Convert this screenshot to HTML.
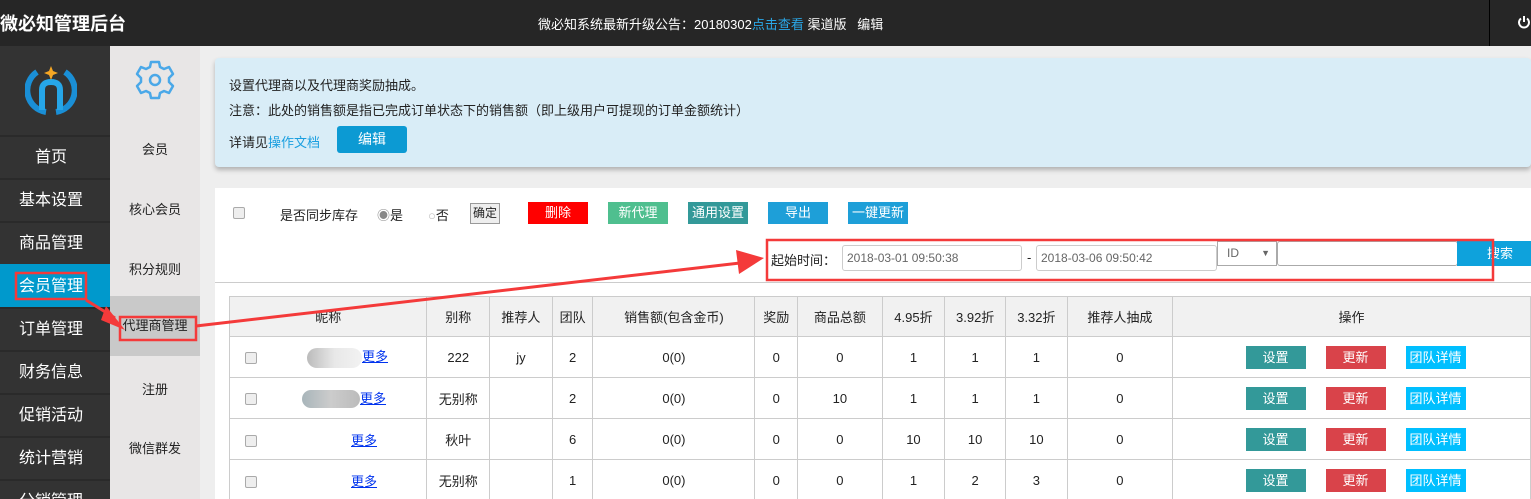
<!DOCTYPE html>
<html><head><meta charset="utf-8"><style>
*{margin:0;padding:0;box-sizing:border-box}
html,body{width:1531px;height:499px;overflow:hidden}
body{background:#eee;font-family:"Liberation Sans","Noto Sans CJK SC",sans-serif;font-size:13px;color:#222;position:relative}
.a{position:absolute}
.top{left:0;top:0;width:1531px;height:46px;background:#262626;color:#fff}
.side{left:0;top:46px;width:110px;height:453px;background:#333}
.si{position:absolute;left:0;width:110px;height:43px;border-top:2px solid #2a2a2a;color:#fff;font-size:16px;text-align:center;line-height:41px;padding-right:8px}
.side2{left:110px;top:46px;width:90px;height:453px;background:#e8e6e6}
.s2{position:absolute;left:0;width:90px;text-align:center;font-size:13px;color:#222}
.btn{position:absolute;height:22px;line-height:22px;color:#fff;text-align:center;font-size:13px;width:60px}
.ob{display:inline-block;width:60px;height:23px;line-height:23px;color:#fff;margin:0 10px;vertical-align:middle}
table{border-collapse:collapse;table-layout:fixed;position:absolute;left:229px;top:296px}
td{border:1px solid #ccc;text-align:center;height:41px;font-size:13px;color:#222;background:#fff;padding:0}
tr.h td{background:#f1f1f1;height:40px}
td.op{padding-left:8px}
.cb{display:inline-block;width:12px;height:12px;border:1px solid #aaa;border-radius:2px;background:#eee;vertical-align:middle}
a{color:#0033ee;text-decoration:underline}
.inp{position:absolute;height:26px;border:1px solid #ccc;border-radius:3px;background:#fff;color:#666;font-size:12px;line-height:24px;padding-left:4px}
</style></head><body>
<div class="a top">
 <div class="a" style="left:0;top:10px;font-size:18px;font-weight:bold">微必知管理后台</div>
 <div class="a" style="left:538px;top:14px;font-size:13px">微必知系统最新升级公告：20180302<span style="color:#2aa8e8">点击查看</span> 渠道版&nbsp;&nbsp;&nbsp;编辑</div>
 <div class="a" style="left:1489px;top:0;width:1px;height:46px;background:#000"></div>
 <svg class="a" style="left:1517px;top:14px" width="14" height="16"><path d="M7 2v6M4 4.5A5 5 0 1 0 10 4.5" stroke="#fff" stroke-width="2" fill="none"/></svg>
</div>
<div class="a side">
 <svg class="a" style="left:25px;top:18px" width="52" height="52" viewBox="0 0 52 52"><path d="M12 8A22 22 0 0 0 21 48" stroke="#1a8fd6" stroke-width="6" fill="none"/><path d="M40 8A22 22 0 0 1 31 48" stroke="#1a8fd6" stroke-width="6" fill="none"/><path d="M17 46V26q0-8 9-8t9 8v20" stroke="#26a6e8" stroke-width="6" fill="none"/><path d="M26 2l2 5 5 2-5 2-2 5-2-5-5-2 5-2z" fill="#f5a623"/></svg>
 <div class="si" style="top:89px">首页</div>
 <div class="si" style="top:132px">基本设置</div>
 <div class="si" style="top:175px">商品管理</div>
 <div class="si" style="top:218px;background:#0099cc;border-top-color:#0099cc">会员管理</div>
 <div class="si" style="top:261px">订单管理</div>
 <div class="si" style="top:304px">财务信息</div>
 <div class="si" style="top:347px">促销活动</div>
 <div class="si" style="top:390px">统计营销</div>
 <div class="si" style="top:433px">分销管理</div>
</div>
<div class="a side2">
 <svg class="a" style="left:24px;top:13px" width="42" height="42" viewBox="0 0 42 42"><path d="M17 3h8l1 5 4 2 5-2 4 7-4 4v4l4 4-4 7-5-2-4 2-1 5h-8l-1-5-4-2-5 2-4-7 4-4v-4l-4-4 4-7 5 2 4-2z" stroke="#4aa8e8" stroke-width="2.5" fill="none" stroke-linejoin="round"/><circle cx="21" cy="21" r="5" stroke="#4aa8e8" stroke-width="2.5" fill="none"/></svg>
 <div class="s2" style="top:93px">会员</div>
 <div class="s2" style="top:153px">核心会员</div>
 <div class="s2" style="top:213px">积分规则</div>
 <div class="s2" style="top:250px;height:60px;background:#c9c9c9;line-height:60px">代理商管理</div>
 <div class="s2" style="top:333px">注册</div>
 <div class="s2" style="top:392px">微信群发</div>
</div>
<div class="a" style="left:215px;top:58px;width:1316px;height:109px;background:#d9edf7;border-radius:4px;box-shadow:0 3px 5px rgba(0,0,0,.25);font-size:13px">
 <div class="a" style="left:14px;top:17px">设置代理商以及代理商奖励抽成。</div>
 <div class="a" style="left:14px;top:42px">注意：此处的销售额是指已完成订单状态下的销售额（即上级用户可提现的订单金额统计）</div>
 <div class="a" style="left:14px;top:74px">详请见<span style="color:#1a9fe0">操作文档</span></div>
 <div class="a" style="left:122px;top:68px;width:70px;height:27px;background:#0c9ad3;border-radius:3px;color:#fff;text-align:center;line-height:27px;font-size:14px">编辑</div>
</div>
<div class="a" style="left:215px;top:188px;width:1316px;height:311px;background:#fff"></div>
<div class="a" style="left:215px;top:282px;width:1316px;height:1px;background:#ccc"></div>
<span class="a cb" style="left:233px;top:207px"></span>
<div class="a" style="left:280px;top:205px">是否同步库存</div>
<div class="a" style="left:377px;top:205px"><span style="color:#888">◉</span>是</div>
<div class="a" style="left:428px;top:205px"><span style="color:#bbb">○</span>否</div>
<div class="a" style="left:470px;top:203px;width:30px;height:21px;border:1px solid #999;background:#eee;font-size:12px;text-align:center;line-height:19px">确定</div>
<div class="btn" style="left:528px;top:202px;background:#ff0000">删除</div>
<div class="btn" style="left:608px;top:202px;background:#4fbf8f">新代理</div>
<div class="btn" style="left:688px;top:202px;background:#339999">通用设置</div>
<div class="btn" style="left:768px;top:202px;background:#1e9fd8">导出</div>
<div class="btn" style="left:848px;top:202px;background:#1e9fd8">一键更新</div>
<div class="a" style="left:771px;top:250px">起始时间：</div>
<div class="inp" style="left:842px;top:245px;width:180px">2018-03-01 09:50:38</div>
<div class="a" style="left:1027px;top:250px">-</div>
<div class="inp" style="left:1036px;top:245px;width:181px">2018-03-06 09:50:42</div>
<div class="inp" style="left:1217px;top:241px;width:60px;height:25px;border-radius:0;border-color:#aaa;line-height:23px;padding-left:9px">ID <span style="position:absolute;right:6px;font-size:9px">▼</span></div>
<div class="inp" style="left:1277px;top:241px;width:181px;height:25px;border-color:#aaa"></div>
<div class="a" style="left:1457px;top:241px;width:74px;height:25px;background:#0ea2dc;color:#fff;line-height:25px;padding-left:30px">搜索</div>
<table>
<colgroup><col width="198"><col width="63"><col width="63"><col width="41"><col width="163"><col width="43"><col width="85"><col width="63"><col width="61"><col width="62"><col width="106"><col width="360"></colgroup>
<tr class="h"><td>昵称</td><td>别称</td><td>推荐人</td><td>团队</td><td>销售额(包含金币)</td><td>奖励</td><td>商品总额</td><td>4.95折</td><td>3.92折</td><td>3.32折</td><td>推荐人抽成</td><td>操作</td></tr>
<tr><td style="text-align:left;padding-left:15px"><span class="cb"></span><span style="display:inline-block;width:55px;height:20px;margin-left:50px;background:linear-gradient(90deg,#bbb,#e8e8e8,#f2f2f2);border-radius:10px;vertical-align:middle"></span><a>更多</a></td><td>222</td><td>jy</td><td>2</td><td>0(0)</td><td>0</td><td>0</td><td>1</td><td>1</td><td>1</td><td>0</td><td class="op"><span class="ob" style="background:#339999">设置</span><span class="ob" style="background:#d9434a">更新</span><span class="ob" style="background:#00bfff">团队详情</span></td></tr>
<tr><td style="text-align:left;padding-left:15px"><span class="cb"></span><span style="display:inline-block;width:58px;height:18px;margin-left:45px;background:linear-gradient(90deg,#a8b5ba,#ccc,#bbb);border-radius:9px;vertical-align:middle"></span><a>更多</a></td><td>无别称</td><td></td><td>2</td><td>0(0)</td><td>0</td><td>10</td><td>1</td><td>1</td><td>1</td><td>0</td><td class="op"><span class="ob" style="background:#339999">设置</span><span class="ob" style="background:#d9434a">更新</span><span class="ob" style="background:#00bfff">团队详情</span></td></tr>
<tr><td style="text-align:left;padding-left:15px"><span class="cb"></span><a style="margin-left:94px">更多</a></td><td>秋叶</td><td></td><td>6</td><td>0(0)</td><td>0</td><td>0</td><td>10</td><td>10</td><td>10</td><td>0</td><td class="op"><span class="ob" style="background:#339999">设置</span><span class="ob" style="background:#d9434a">更新</span><span class="ob" style="background:#00bfff">团队详情</span></td></tr>
<tr><td style="text-align:left;padding-left:15px"><span class="cb"></span><a style="margin-left:94px">更多</a></td><td>无别称</td><td></td><td>1</td><td>0(0)</td><td>0</td><td>0</td><td>1</td><td>2</td><td>3</td><td>0</td><td class="op"><span class="ob" style="background:#339999">设置</span><span class="ob" style="background:#d9434a">更新</span><span class="ob" style="background:#00bfff">团队详情</span></td></tr>
</table>
<svg class="a" style="left:0;top:0" width="1531" height="499">
<g stroke="#f43a3a" fill="none" stroke-width="2.5">
<rect x="16" y="273" width="70" height="26"/>
<rect x="120" y="317" width="76" height="23"/>
<rect x="767" y="240" width="726" height="40"/>
<line x1="86" y1="300" x2="115" y2="318" stroke-width="3"/>
<line x1="196" y1="326" x2="740" y2="263" stroke-width="3"/>
</g>
<path d="M122 328 L108 310 L118 321 Z M106 306 L125 330 L101 320 Z" fill="#f43a3a"/>
<path d="M764 258 L736 250 L739 274 Z" fill="#f43a3a"/>
</svg>
</body></html>
